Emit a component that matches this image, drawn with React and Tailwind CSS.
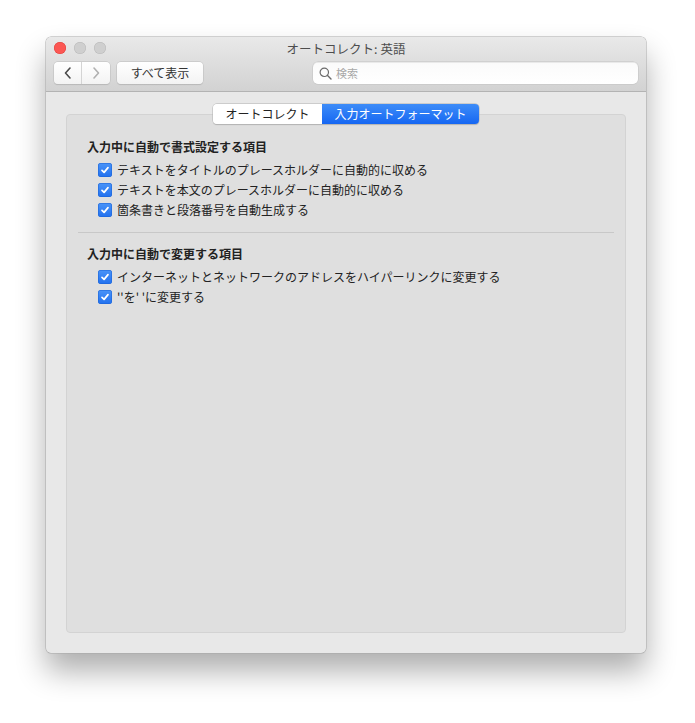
import React from "react";

const font = { fontFamily: '"Noto Sans CJK JP", "Noto Sans", sans-serif' };

const Check = () => (
  <span className="flex h-[14px] w-[14px] shrink-0 items-center justify-center rounded-[3px] bg-gradient-to-b from-[#4a94f8] to-[#2170ee] shadow-[inset_0_0_0_0.5px_#1b62d4]">
    <svg width="10" height="10" viewBox="0 0 10 10">
      <path d="M2 5.3 L4.1 7.4 L8 2.6" fill="none" stroke="white" strokeWidth="1.7" strokeLinecap="round" strokeLinejoin="round" />
    </svg>
  </span>
);

const Row = ({ label }) => (
  <div className="flex h-[20px] items-center gap-[5px] pl-[11px]">
    <Check />
    <span className="text-[12px] leading-none text-[#222]">{label}</span>
  </div>
);

const Section = ({ title, items }) => (
  <div className="flex flex-col">
    <div className="mb-[3px] text-[12px] font-bold leading-[20px] text-[#222]">{title}</div>
    {items.map((t) => (
      <Row key={t} label={t} />
    ))}
  </div>
);

export default function App() {
  return (
    <div className="min-h-[723px] w-[695px] bg-white pl-[46px] pt-[37px]" style={font}>
      <div className="flex h-[616px] w-[600px] flex-col overflow-hidden rounded-[5px] bg-[#e8e8e8] shadow-[0_0_0_0.5px_#a8a8a8,0_18px_30px_rgba(0,0,0,0.32)]">
        {/* titlebar + toolbar */}
        <div className="flex h-[55px] shrink-0 flex-col border-b border-[#b3b3b3] bg-gradient-to-b from-[#e9e9e9] to-[#d2d2d2]">
          <div className="relative flex h-[22px] items-center pl-[8px]">
            <div className="flex gap-[8px]">
              <span className="h-[12px] w-[12px] rounded-full bg-[#fc5753] shadow-[inset_0_0_0_0.5px_#df3e3a]" />
              <span className="h-[12px] w-[12px] rounded-full bg-[#cfcfcf] shadow-[inset_0_0_0_0.5px_#b8b8b8]" />
              <span className="h-[12px] w-[12px] rounded-full bg-[#cfcfcf] shadow-[inset_0_0_0_0.5px_#b8b8b8]" />
            </div>
            <div className="absolute inset-0 flex items-center justify-center pt-[2px] text-[12.5px] text-[#4d4d4d]">
              オートコレクト: 英語
            </div>
          </div>
          <div className="mt-[3px] flex h-[22px] items-center pl-[8px] pr-[8px]">
            <div className="flex h-[22px] w-[56px] overflow-hidden rounded-[4px] bg-gradient-to-b from-white to-[#f3f3f3] shadow-[0_0_0_0.5px_#bdbdbd,0_0.5px_1px_rgba(0,0,0,0.15)]">
              <div className="flex w-[28px] items-center justify-center border-r border-[#d4d4d4]">
                <svg width="10" height="14" viewBox="0 0 10 14">
                  <path d="M7 2 L2.5 7 L7 12" fill="none" stroke="#4a4a4a" strokeWidth="1.6" strokeLinecap="round" strokeLinejoin="round" />
                </svg>
              </div>
              <div className="flex flex-1 items-center justify-center">
                <svg width="10" height="14" viewBox="0 0 10 14">
                  <path d="M3 2 L7.5 7 L3 12" fill="none" stroke="#b0b0b0" strokeWidth="1.6" strokeLinecap="round" strokeLinejoin="round" />
                </svg>
              </div>
            </div>
            <div className="ml-[7px] flex h-[22px] w-[86px] items-center justify-center rounded-[4px] bg-gradient-to-b from-white to-[#f3f3f3] text-[12px] text-[#333] shadow-[0_0_0_0.5px_#bdbdbd,0_0.5px_1px_rgba(0,0,0,0.15)]">
              すべて表示
            </div>
            <div className="ml-auto flex h-[22px] w-[325px] items-center gap-[4px] rounded-[5px] bg-gradient-to-b from-[#fafafa] to-white pl-[6px] shadow-[0_0_0_0.5px_#c2c2c2,inset_0_0.5px_0_#d8d8d8]">
              <svg width="13" height="13" viewBox="0 0 13 13">
                <circle cx="5.3" cy="5.3" r="4.2" fill="none" stroke="#6a6a6a" strokeWidth="1.2" />
                <path d="M8.3 8.3 L12 12" stroke="#6a6a6a" strokeWidth="1.4" strokeLinecap="round" />
              </svg>
              <span className="text-[11px] text-[#a8a8a8]">検索</span>
            </div>
          </div>
        </div>

        {/* content */}
        <div className="flex flex-1 flex-col px-[20px] pb-[20px] pt-[12px]">
          <div className="relative z-10 flex justify-center">
            <div className="flex h-[20px] overflow-hidden rounded-[4px] text-[12px] shadow-[0_0_0_0.5px_#b5b5b5,0_0.5px_1px_rgba(0,0,0,0.2)]">
              <div className="flex w-[109px] items-center justify-center bg-white text-[#222]">オートコレクト</div>
              <div className="flex w-[157px] items-center justify-center bg-gradient-to-b from-[#3d8cf8] to-[#1566f2] text-white">
                入力オートフォーマット
              </div>
            </div>
          </div>
          <div className="-mt-[10px] flex flex-1 flex-col rounded-[4px] border border-[#d3d3d3] bg-[#dfdfdf] px-[11px] pt-[22px]">
            <div className="pl-[9px]">
              <Section
                title="入力中に自動で書式設定する項目"
                items={[
                  "テキストをタイトルのプレースホルダーに自動的に収める",
                  "テキストを本文のプレースホルダーに自動的に収める",
                  "箇条書きと段落番号を自動生成する",
                ]}
              />
            </div>
            <div className="mb-[11px] mt-[12px] h-px bg-[#c8c8c8]" />
            <div className="pl-[9px]">
              <Section
                title="入力中に自動で変更する項目"
                items={[
                  "インターネットとネットワークのアドレスをハイパーリンクに変更する",
                  "''を' 'に変更する",
                ]}
              />
            </div>
          </div>
        </div>
      </div>
    </div>
  );
}
